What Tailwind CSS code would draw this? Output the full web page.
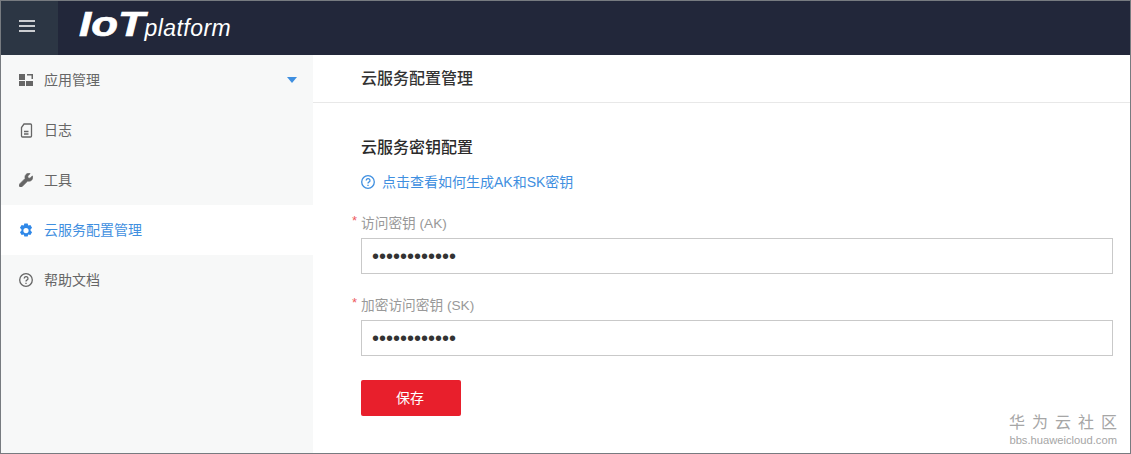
<!DOCTYPE html>
<html lang="en">
<head>
    <meta charset="UTF-8">
    <meta name="viewport" content="width=device-width, initial-scale=1.0">
    <title>IoT platform</title>
    <script src="https://cdn.jsdelivr.net/npm/@tailwindcss/browser@4"></script>
</head>
<body class="font-['Liberation_Sans','Noto_Sans_CJK_SC',sans-serif]">
    <div class="relative w-[1131px] h-[454px] border border-[#777b80] flex flex-col overflow-hidden bg-white">
        <!-- top bar -->
        <header class="h-[54px] shrink-0 bg-[#22273a] flex items-stretch">
            <div class="w-[57px] bg-[#2c3644] flex items-center justify-center pb-[5px] pr-[5px]">
                <svg width="16" height="12" viewBox="0 0 16 12"><path d="M0 1h16M0 6h16M0 11h16" stroke="#fff" stroke-width="1.6"/></svg>
            </div>
            <div class="flex items-baseline pl-[21px] pt-[1px] text-white italic">
                <span class="inline-block origin-left scale-x-[1.25] text-[35px] leading-[44px] font-bold [-webkit-text-stroke:0.7px_white]">IoT</span>
                <span class="text-[23px] leading-[44px] ml-[13px] tracking-[0.45px]">platform</span>
            </div>
        </header>

        <div class="flex flex-1 min-h-0">
            <!-- sidebar -->
            <nav class="w-[312px] shrink-0 bg-[#f7f8f8] text-[14px] text-[#666]">
                <div class="h-[50px] flex items-center pl-[18px] pr-[16px]">
                    <svg class="w-[14px] h-[14px] mr-[11px]" viewBox="0 0 14 14" fill="#666"><path d="M0 1h6v6H0zM0 8h6v5H0zM7 8h7v5H7zM8 1h6v5h-1.500V2.500H8z"/></svg>
                    <span class="flex-1">应用管理</span>
                    <span class="w-0 h-0 border-x-[5px] border-x-transparent border-t-[6px] border-t-[#3f8fe0]"></span>
                </div>
                <div class="h-[50px] flex items-center pl-[18px]">
                    <svg class="w-[14px] h-[15px] mr-[11px]" viewBox="0 0 14 15" fill="none" stroke="#666" stroke-width="1.300"><path d="M5 1h6.500a1 1 0 0 1 1 1v11a1 1 0 0 1-1 1h-8a1 1 0 0 1-1-1V4.500zM5 8.500h4.500M5 11h4.500"/></svg>
                    <span>日志</span>
                </div>
                <div class="h-[50px] flex items-center pl-[18px]">
                    <svg class="w-[14px] h-[14px] mr-[11px]" viewBox="0 0 14 14" fill="#666" stroke="#666" stroke-width="0.600"><path d="M13.700 3.200c-.1-.3-.4-.3-.6-.1l-2.100 2.100-1.900-.3-.3-1.900L10.900.9c.2-.2.100-.5-.1-.6C9.500 0 8 .3 7 1.400 5.900 2.500 5.700 4 6.100 5.400L.6 10.900c-.8.800-.8 2.100 0 2.700.7.700 1.900.700 2.600 0l5.500-5.500c1.400.4 2.900.1 3.900-.9 1.100-1.100 1.400-2.600 1.100-4z"/></svg>
                    <span>工具</span>
                </div>
                <div class="h-[50px] flex items-center pl-[18px] bg-white text-[#3f8fe0]">
                    <svg class="w-[14px] h-[14px] mr-[11px]" viewBox="1.400 1.100 11.200 11.800"><path fill="#2f88e8" fill-rule="evenodd" d="M5.600.5h2.800l.5 1.800 1.800-.5 1.400 2.400-1.300 1.300 0 1 1.300 1.300-1.400 2.400-1.800-.5-.5 1.800H5.600l-.5-1.800-1.800.5L1.900 7.800l1.300-1.300 0-1L1.900 4.200l1.400-2.400 1.800.5zM7 4.300a2.200 2.200 0 1 0 0 4.400 2.200 2.200 0 0 0 0-4.400z" transform="translate(0 1)"/></svg>
                    <span>云服务配置管理</span>
                </div>
                <div class="h-[50px] flex items-center pl-[18px]">
                    <svg class="w-[14px] h-[14px] mr-[11px]" viewBox="0 0 14 14" fill="none" stroke="#666" stroke-width="1.300"><circle cx="7" cy="7" r="6.300"/><path d="M5.200 5.500a1.900 1.900 0 1 1 2.700 1.700c-.6.300-.9.700-.9 1.300"/><path d="M7 9.800v1.200"/></svg>
                    <span>帮助文档</span>
                </div>
            </nav>

            <!-- content -->
            <main class="flex-1 min-w-0">
                <div class="h-[48px] border-b border-[#e8e8e8] pl-[48px] pt-[1px] flex items-center text-[16px] font-medium text-[#333]">云服务配置管理</div>
                <div class="pl-[48px] pr-[17px]">
                    <h2 class="mt-[33px] text-[16px] leading-[24px] font-medium text-[#2b2b2b]">云服务密钥配置</h2>
                    <a class="mt-[10px] h-[24px] flex items-center text-[14px] text-[#3f8fe0]">
                        <svg class="w-[14px] h-[14px] mr-[7px]" viewBox="0 0 14 14" fill="none" stroke="#3f8fe0" stroke-width="1.300"><circle cx="7" cy="7" r="6.300"/><path d="M5.200 5.500a1.900 1.900 0 1 1 2.700 1.700c-.6.300-.9.700-.9 1.300"/><path d="M7 9.800v1.200"/></svg>
                        点击查看如何生成AK和SK密钥
                    </a>
                    <div class="mt-[20px]">
                        <label class="relative block h-[20px] leading-[20px] text-[13.700px] text-[#999]"><span class="absolute left-[-9px] top-[-3px] text-[13px] text-[#ee5a5f]">*</span>访问密钥 (AK)</label>
                        <input type="password" value="123456789012" class="mt-[4px] block w-full h-[36px] border border-[#c9c9c9] px-[10px] text-[20px] text-[#333]">
                    </div>
                    <div class="mt-[22px]">
                        <label class="relative block h-[20px] leading-[20px] text-[13.700px] text-[#999]"><span class="absolute left-[-9px] top-[-3px] text-[13px] text-[#ee5a5f]">*</span>加密访问密钥 (SK)</label>
                        <input type="password" value="123456789012" class="mt-[4px] block w-full h-[36px] border border-[#c9c9c9] px-[10px] text-[20px] text-[#333]">
                    </div>
                    <button class="mt-[24px] block w-[100px] h-[36px] pr-[2px] rounded-[2px] bg-[#e81f2c] text-white text-[14px]">保存</button>
                </div>
            </main>
        </div>

        <!-- watermark -->
        <div class="absolute right-[13px] bottom-[6px] text-[#a6a6a6] text-right">
            <div class="text-[16px] leading-[20px] tracking-[7px] mr-[-7px]">华为云社区</div>
            <div class="text-[11.200px] leading-[14px]">bbs.huaweicloud.com</div>
        </div>
    </div>
</body>
</html>
